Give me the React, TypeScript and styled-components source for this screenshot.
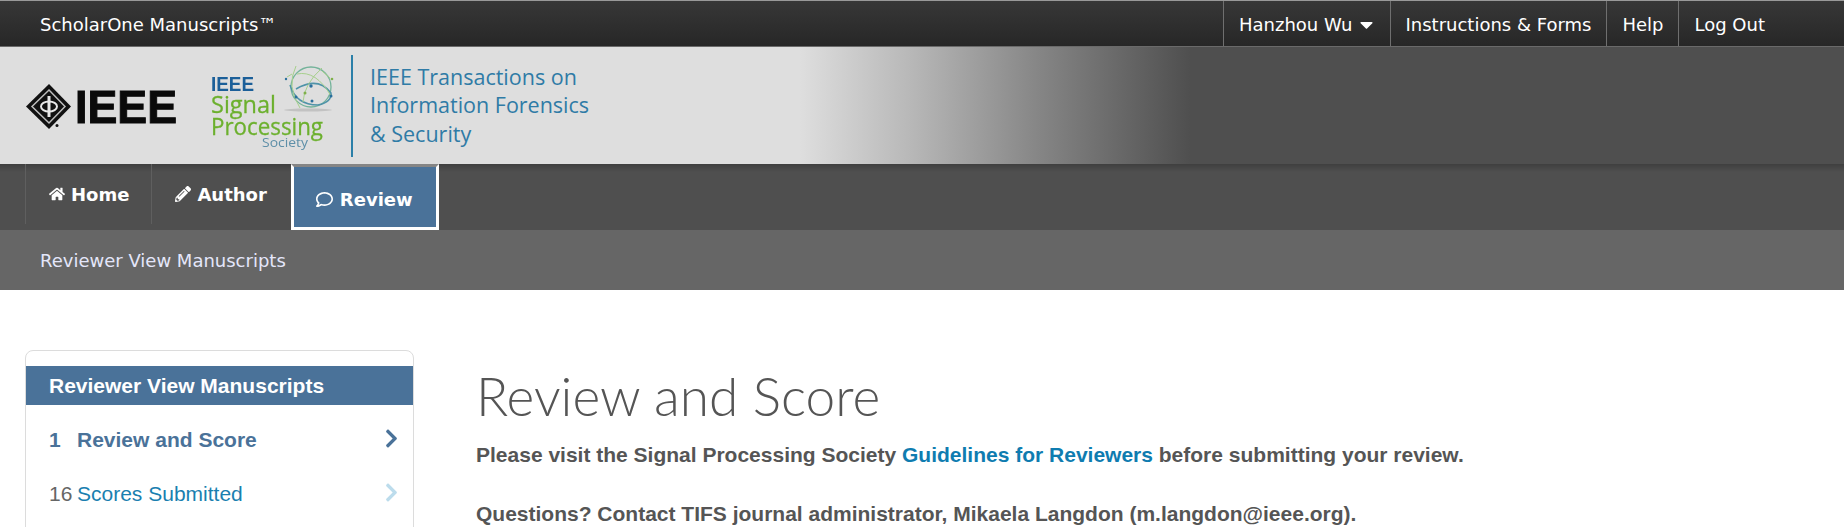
import React from "react";
import styled, { createGlobalStyle } from "styled-components";
import { FaHome, FaPencilAlt, FaRegComment, FaChevronRight, FaCaretDown } from "react-icons/fa";

const Global = createGlobalStyle`
  html, body { margin: 0; padding: 0; background: #fff; overflow: hidden; }
  * { box-sizing: border-box; }
`;

const Page = styled.div`
  width: 1844px;
  height: 527px;
  overflow: hidden;
  display: flex;
  flex-direction: column;
`;

const TopBar = styled.div`
  height: 47px;
  flex: none;
  display: flex;
  align-items: stretch;
  justify-content: space-between;
  padding: 0 64px 0 40px;
  background: linear-gradient(#373737, #272727);
  border-top: 1px solid #999;
  border-bottom: 1px solid #6a6a6a;
  color: #fff;
  font: 18px "DejaVu Sans", sans-serif;
`;

const Brand = styled.div`
  display: flex;
  align-items: center;
  padding-top: 2px;
`;

const TopNav = styled.nav`
  display: flex;
`;

const TopLink = styled.a`
  display: flex;
  align-items: center;
  gap: 3px;
  padding: 2px 15px 0;
  border-left: 1px solid #6f6f6f;
  & svg { font-size: 21px; margin-right: -2px; }
`;

const Banner = styled.header`
  height: 117px;
  flex: none;
  display: flex;
  align-items: center;
  padding-left: 24px;
  background: linear-gradient(90deg, #dedede 800px, #b8b8b8 910px, #858585 1040px, #4f4f4f 1190px);
`;

const LogoArt = styled.svg`
  flex: none;
  display: block;
  filter: blur(0.35px);
`;

const JournalRule = styled.div`
  width: 2px;
  height: 102px;
  background: #2a7fa8;
`;

const JournalTitle = styled.div`
  margin-left: 17px;
  color: #2f7ba6;
  font: 400 21.5px/28.6px "Open Sans", sans-serif;
  white-space: pre-line;
`;

const TabBar = styled.nav`
  height: 66px;
  flex: none;
  display: flex;
  padding-left: 25px;
  background: linear-gradient(#3f3f3f, #4f4f4f 8px);
  font: 700 18px "DejaVu Sans", sans-serif;
  color: #fff;
`;

const Tab = styled.a`
  height: 60px;
  display: flex;
  align-items: center;
  gap: 6px;
  padding: 0 22px 0 23px;
  border-left: 1px solid #5f5f5f;
  & svg { font-size: 16px; }
`;

const ActiveTab = styled.a`
  display: flex;
  align-items: center;
  gap: 7px;
  margin-left: 2px;
  padding: 5px 23px 0 22px;
  background: #4a7299;
  border: 3px solid #fff;
  border-top-color: #858585;
  & svg { font-size: 17px; }
`;

const SubBar = styled.div`
  height: 60px;
  flex: none;
  display: flex;
  align-items: center;
  padding-left: 40px;
  background: #666;
  color: #e4e6fa;
  font: 18px "DejaVu Sans", sans-serif;
`;

const Main = styled.main`
  flex: 1;
  display: flex;
  align-items: flex-start;
  padding: 60px 0 0 25px;
  font-family: "Liberation Sans", Arial, sans-serif;
`;

const SideCard = styled.aside`
  width: 389px;
  height: 300px;
  flex: none;
  padding-top: 15px;
  border: 1px solid #dcdcdc;
  border-radius: 8px;
`;

const SideHeading = styled.div`
  height: 39px;
  display: flex;
  align-items: center;
  padding-left: 23px;
  background: #4a7299;
  color: #fff;
  font-size: 21px;
  font-weight: 700;
`;

const SideRow = styled.div<{ $first?: boolean }>`
  height: 54px;
  display: flex;
  align-items: center;
  padding: 0 11px 0 23px;
  font-size: 21px;
  margin-top: ${(p) => (p.$first ? "8px" : "0")};
`;

const RowCount = styled.span<{ $active?: boolean }>`
  width: 28px;
  flex: none;
  color: ${(p) => (p.$active ? "#4a7299" : "#666")};
  font-weight: ${(p) => (p.$active ? 700 : 400)};
`;

const RowLabel = styled.span<{ $active?: boolean }>`
  flex: 1;
  color: ${(p) => (p.$active ? "#4a7299" : "#1a7fb0")};
  font-weight: ${(p) => (p.$active ? 700 : 400)};
`;

const RowChevron = styled(FaChevronRight)<{ $active?: boolean }>`
  color: ${(p) => (p.$active ? "#4a7299" : "#bcdcec")};
  font-size: 21px;
  margin-top: -4px;
`;

const Content = styled.section`
  margin-left: 62px;
  color: #555;
`;

const Title = styled.h1`
  margin: 11px 0 0;
  font: 300 53.2px/68px Lato, sans-serif;
  color: #555;
`;

const Para = styled.p`
  margin: 0 0 35px;
  font-size: 21px;
  line-height: 24px;
  font-weight: 700;
  &:first-of-type { margin-top: 14px; }
`;

const TextLink = styled.a`
  color: #0f7cb0;
`;

export default function App() {
  return (
    <Page>
      <Global />
      <TopBar>
        <Brand>ScholarOne Manuscripts™</Brand>
        <TopNav>
          <TopLink>Hanzhou Wu <FaCaretDown /></TopLink>
          <TopLink>Instructions &amp; Forms</TopLink>
          <TopLink>Help</TopLink>
          <TopLink>Log Out</TopLink>
        </TopNav>
      </TopBar>
      <Banner>
        <LogoArt width="327" height="117" viewBox="24 47 327 117">
          <g>
            <path d="M49 84 L71 106.500 L49 129 L26 106.500 Z" fill="#111" />
            <path d="M49 90 L65 106.500 L49 123 L32 106.500 Z" fill="none" stroke="#bdbdbd" strokeWidth="1.500" />
            <ellipse cx="49" cy="106.500" rx="8" ry="5" fill="none" stroke="#e8e8e8" strokeWidth="2" />
            <path d="M49 96 V117" stroke="#e8e8e8" strokeWidth="3" />
            <circle cx="57" cy="125.500" r="1.500" fill="#111" />
            <text x="75" y="123" fontFamily="Liberation Sans" fontWeight="700" fontSize="47" textLength="102" lengthAdjust="spacingAndGlyphs" fill="#0a0a0a" stroke="#0a0a0a" strokeWidth="1">IEEE</text>
          </g>
          <g>
            <ellipse cx="308" cy="110" rx="24" ry="1.500" fill="#c2c2c2" />
            <circle cx="311" cy="87" r="20" fill="none" stroke="#74b39a" strokeWidth="1.300" />
            <path d="M290 85 Q296 105 318 105 Q332 102 331 93 Q318 76 296 89" fill="none" stroke="#4f93a8" strokeWidth="1.500" />
            <path d="M296 66 Q286 86 300 108 M303 102 Q304 84 322 68 M297 74 Q316 70 331 96 M287 77 L292 74 M330 78 L322 71" fill="none" stroke="#a6cf8c" strokeWidth="1" />
            <circle cx="312" cy="101" r="1.500" fill="#2a6f9c" />
            <circle cx="296" cy="97" r="1.500" fill="#2a6f9c" />
            <circle cx="311" cy="86" r="1.700" fill="#2a6f9c" />
            <circle cx="331" cy="96" r="1.500" fill="#2a6f9c" />
            <circle cx="305" cy="93" r="1.500" fill="#7fb04a" />
            <circle cx="332" cy="79" r="1.300" fill="#7fb04a" />
            <circle cx="286" cy="79" r="1.200" fill="#2a6f9c" />
            <text x="211" y="91" fontFamily="Liberation Sans" fontWeight="700" fontSize="20" textLength="43" lengthAdjust="spacingAndGlyphs" fill="#1b5f99">IEEE</text>
            <text x="211" y="113" fontFamily="Open Sans" fontSize="24" textLength="65" lengthAdjust="spacingAndGlyphs" fill="#6cb02e" stroke="#6cb02e" strokeWidth="0.300">Signal</text>
            <text x="211" y="135" fontFamily="Open Sans" fontSize="24" textLength="112" lengthAdjust="spacingAndGlyphs" fill="#6cb02e" stroke="#6cb02e" strokeWidth="0.300">Processing</text>
            <text x="262" y="147" fontFamily="Open Sans" fontSize="13.500" textLength="46" lengthAdjust="spacingAndGlyphs" fill="#5e8fa8">Society</text>
          </g>
        </LogoArt>
        <JournalRule />
        <JournalTitle>{"IEEE Transactions on\nInformation Forensics\n& Security"}</JournalTitle>
      </Banner>
      <TabBar>
        <Tab><FaHome />Home</Tab>
        <Tab><FaPencilAlt />Author</Tab>
        <ActiveTab><FaRegComment />Review</ActiveTab>
      </TabBar>
      <SubBar>Reviewer View Manuscripts</SubBar>
      <Main>
        <SideCard>
          <SideHeading>Reviewer View Manuscripts</SideHeading>
          <SideRow $first>
            <RowCount $active>1</RowCount>
            <RowLabel $active>Review and Score</RowLabel>
            <RowChevron $active />
          </SideRow>
          <SideRow>
            <RowCount>16</RowCount>
            <RowLabel>Scores Submitted</RowLabel>
            <RowChevron />
          </SideRow>
        </SideCard>
        <Content>
          <Title>Review and Score</Title>
          <Para>
            Please visit the Signal Processing Society <TextLink>Guidelines for Reviewers</TextLink> before submitting your review.
          </Para>
          <Para>Questions? Contact TIFS journal administrator, Mikaela Langdon (m.langdon@ieee.org).</Para>
        </Content>
      </Main>
    </Page>
  );
}
